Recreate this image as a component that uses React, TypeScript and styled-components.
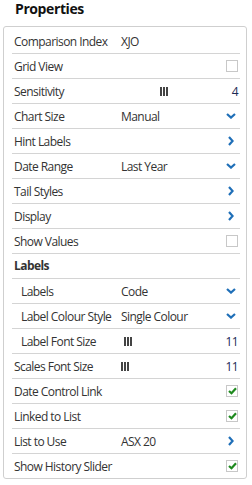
import React, { FunctionComponent, ReactElement } from 'react'
import styled, { createGlobalStyle } from 'styled-components'

const GlobalStyle = createGlobalStyle`
  body {
    margin: 0;
    background: #fff;
    font-family: 'Open Sans', 'Liberation Sans', sans-serif;
    color: #333;
  }
`

const Title = styled.h1`
  font-size: 14px;
  font-weight: 700;
  letter-spacing: -0.4px;
  line-height: 18px;
  margin: 0 0 8px;
  padding-left: 15px;
  color: #111;
`

const Panel = styled.div`
  border: 1px solid #cfcfcf;
  border-radius: 3px;
  margin-left: 3px;
  padding: 2px 6px 0 8px;
  width: 228px;
`

const Row = styled.div<{ $indent?: boolean }>`
  align-items: center;
  border-bottom: 1px solid #d4d4d4;
  display: grid;
  font-size: 12px;
  grid-template-columns: 109px 1fr auto;
  height: 24px;
  letter-spacing: -0.55px;
  padding-right: 2px;

  &:last-child {
    border-bottom: none;
  }

  > span:first-child {
    padding-left: ${(p) => (p.$indent ? '9px' : '2px')};
  }
`

const Section = styled.div`
  border-bottom: 1px solid #d4d4d4;
  font-size: 12px;
  font-weight: 700;
  height: 24px;
  letter-spacing: -0.55px;
  line-height: 24px;
  padding-left: 2px;
`

const Label = styled.span`
  white-space: nowrap;
`

const Value = styled.span`
  white-space: nowrap;
`

const Number = styled.span`
  color: #1c2a55;
  text-align: right;
`

const Slider = styled.span<{ $offset: number }>`
  display: flex;
  gap: 1px;
  margin-left: ${(p) => p.$offset}px;

  i {
    background: #444;
    display: block;
    height: 9px;
    width: 2px;
  }
`

const Box = styled.span`
  align-items: center;
  background: #fff;
  border: 1px solid #c8c8c8;
  box-sizing: border-box;
  display: flex;
  height: 12px;
  justify-content: center;
  width: 12px;
`

const IconSlot = styled.span`
  display: flex;
  justify-content: center;
  width: 12px;
  margin-right: 1px;
`

const Down = (): ReactElement => (
  <IconSlot>
    <svg width="10" height="6" viewBox="0 0 10 6">
      <path d="M1 1 L5 4.6 L9 1" fill="none" stroke="#1f6fb8" strokeWidth="2.2" />
    </svg>
  </IconSlot>
)

const Right = (): ReactElement => (
  <IconSlot>
    <svg width="6" height="10" viewBox="0 0 6 10">
      <path d="M1 1 L4.6 5 L1 9" fill="none" stroke="#1f6fb8" strokeWidth="2.2" />
    </svg>
  </IconSlot>
)

const Check: FunctionComponent<{ checked?: boolean }> = ({ checked }) => (
  <Box>
    {checked && (
      <svg width="9" height="8" viewBox="0 0 9 8">
        <path d="M1 4 L3.5 6.3 L8 1.2" fill="none" stroke="#1e8a1e" strokeWidth="2.2" />
      </svg>
    )}
  </Box>
)

const Bars: FunctionComponent<{ offset: number }> = ({ offset }) => (
  <Slider $offset={offset}>
    <i />
    <i />
    <i />
  </Slider>
)

const App: FunctionComponent = (): ReactElement => (
  <>
    <GlobalStyle />
    <Title>Properties</Title>
    <Panel>
      <Row>
        <Label>Comparison Index</Label>
        <Value>XJO</Value>
        <span />
      </Row>
      <Row>
        <Label>Grid View</Label>
        <span />
        <Check />
      </Row>
      <Row>
        <Label>Sensitivity</Label>
        <Bars offset={39} />
        <Number>4</Number>
      </Row>
      <Row>
        <Label>Chart Size</Label>
        <Value>Manual</Value>
        <Down />
      </Row>
      <Row>
        <Label>Hint Labels</Label>
        <span />
        <Right />
      </Row>
      <Row>
        <Label>Date Range</Label>
        <Value>Last Year</Value>
        <Down />
      </Row>
      <Row>
        <Label>Tail Styles</Label>
        <span />
        <Right />
      </Row>
      <Row>
        <Label>Display</Label>
        <span />
        <Right />
      </Row>
      <Row>
        <Label>Show Values</Label>
        <span />
        <Check />
      </Row>
      <Section>Labels</Section>
      <Row $indent>
        <Label>Labels</Label>
        <Value>Code</Value>
        <Down />
      </Row>
      <Row $indent>
        <Label>Label Colour Style</Label>
        <Value>Single Colour</Value>
        <Down />
      </Row>
      <Row $indent>
        <Label>Label Font Size</Label>
        <Bars offset={3} />
        <Number>11</Number>
      </Row>
      <Row>
        <Label>Scales Font Size</Label>
        <Bars offset={0} />
        <Number>11</Number>
      </Row>
      <Row>
        <Label>Date Control Link</Label>
        <span />
        <Check checked />
      </Row>
      <Row>
        <Label>Linked to List</Label>
        <span />
        <Check checked />
      </Row>
      <Row>
        <Label>List to Use</Label>
        <Value>ASX 20</Value>
        <Right />
      </Row>
      <Row>
        <Label>Show History Slider</Label>
        <span />
        <Check checked />
      </Row>
    </Panel>
  </>
)

export default App
